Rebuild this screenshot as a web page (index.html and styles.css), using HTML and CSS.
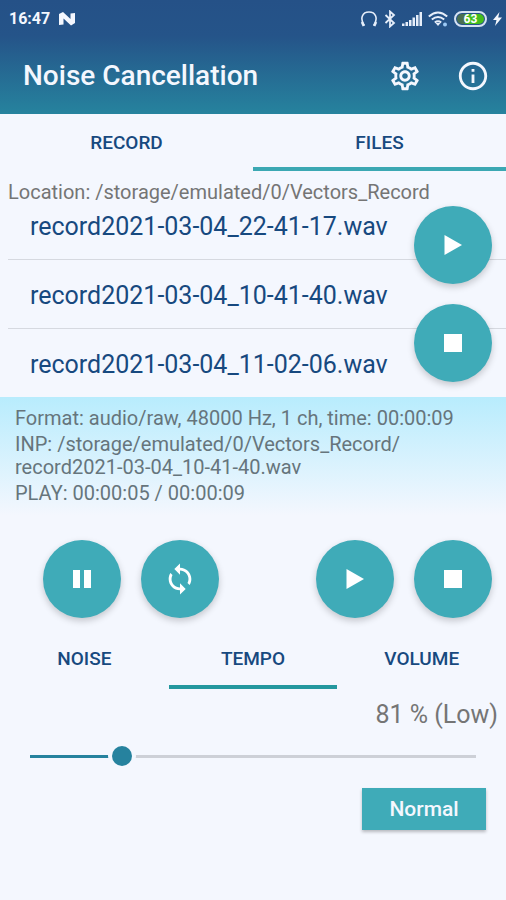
FILE: index.html
```html
<!DOCTYPE html>
<html lang="en">
<head>
<meta charset="utf-8">
<meta name="viewport" content="width=device-width, initial-scale=1">
<title>Noise Cancellation</title>
<link rel="stylesheet" href="styles.css">
</head>
<body>
<header class="header">
  <div class="status">
    <span class="clock">16:47</span>
    <svg class="status-logo" width="16" height="14" viewBox="0 0 16 14" fill="#f4f7fe"><path d="M0 2 4 0 11.500 7V1.500L16 1v10l-4 2.500L4.500 6.500v6L0 13z"/></svg>
    <div class="status-icons">
      <svg width="18" height="18" viewBox="0 0 18 18" fill="none" stroke="#e6eefa" stroke-width="1.600"><path d="M4.200 15.500C-.5 8 2.500 2 9 2s9.500 6 4.800 13.500"/><path d="M2 12l1.800 4M16 12l-1.800 4" stroke-width="2.600"/></svg>
      <svg width="12" height="18" viewBox="0 0 12 18" fill="none" stroke="#e6eefa" stroke-width="1.800"><path d="M1.500 5l8.500 8-4 3.500V1.500L10 5l-8.500 8"/></svg>
      <svg width="20" height="18" viewBox="0 0 20 18" fill="#e6eefa"><path d="M0 13.500h2.500V16H0zM3.500 12H6v4H3.500zM7 10h2.500v6H7zM10.500 7.500H13V16h-2.500zM14 5h2.500v11H14zM17.500 2H20v14h-2.500z"/></svg>
      <svg width="20" height="18" viewBox="0 0 20 18" fill="none" stroke="#e6eefa" stroke-width="2"><path d="M.8 6.500Q10-1.500 19.200 6.500M3.800 9.500q6.200-5 12.400 0M6.800 12.500q3.200-2.500 6.400 0"/><path d="M7.500 13h5L10 16z" fill="#e6eefa" stroke="none"/><circle cx="17" cy="14.500" r="2" fill="#9cc9f5" stroke="none"/></svg>
      <span class="battery">63</span>
      <svg width="9" height="14" viewBox="0 0 9 14" fill="#f4f7fe"><path d="M6.500 0 0 8h3.500L2 14l7-8.500H5.200z"/></svg>
    </div>
  </div>
  <div class="appbar">
    <h1 class="title">Noise Cancellation</h1>
    <button class="icon-button" type="button" aria-label="Settings">
      <svg width="34" height="34" viewBox="0 0 24 24" fill="currentColor"><path d="M19.430 12.980c.04-.32.070-.64.070-.98s-.03-.66-.07-.98l2.110-1.650c.19-.15.240-.42.120-.64l-2-3.460c-.09-.16-.26-.25-.44-.25-.06 0-.12.010-.17.030l-2.490 1c-.52-.4-1.080-.73-1.690-.98l-.38-2.650C14.460 2.180 14.250 2 14 2h-4c-.25 0-.46.180-.49.420l-.38 2.650c-.61.250-1.170.59-1.690.98l-2.490-1c-.06-.02-.12-.03-.18-.03-.17 0-.34.090-.43.250l-2 3.460c-.13.220-.07.490.12.640l2.110 1.650c-.04.320-.07.650-.07.980s.03.660.07.980l-2.110 1.650c-.19.150-.24.420-.12.640l2 3.460c.09.160.26.250.44.250.06 0 .12-.01.170-.03l2.490-1c.52.400 1.080.730 1.690.980l.38 2.650c.03.240.24.420.49.420h4c.25 0 .46-.18.490-.42l.38-2.650c.61-.25 1.170-.59 1.690-.98l2.490 1c.06.020.12.030.18.030.17 0 .34-.09.430-.25l2-3.460c.12-.22.070-.49-.12-.64l-2.110-1.650zm-1.980-1.710c.04.310.05.520.05.730s-.02.430-.05.730l-.14 1.130.89.700 1.080.84-.7 1.210-1.270-.51-1.040-.42-.9.680c-.43.320-.84.560-1.250.73l-1.060.43-.16 1.130-.2 1.350h-1.400l-.19-1.350-.16-1.130-1.060-.43c-.43-.18-.83-.41-1.230-.71l-.91-.7-1.060.43-1.270.51-.7-1.210 1.080-.84.89-.7-.14-1.130c-.03-.31-.05-.54-.05-.74s.02-.43.050-.73l.14-1.130-.89-.7-1.080-.84.7-1.210 1.270.51 1.040.42.900-.68c.43-.32.840-.56 1.250-.73l1.060-.43.160-1.130.2-1.350h1.390l.19 1.350.16 1.130 1.060.43c.43.180.83.410 1.230.71l.91.700 1.060-.43 1.270-.51.700 1.210-1.070.85-.89.700.14 1.130zM12 8c-2.210 0-4 1.790-4 4s1.790 4 4 4 4-1.790 4-4-1.790-4-4-4zm0 6c-1.100 0-2-.9-2-2s.9-2 2-2 2 .9 2 2-.9 2-2 2z"/></svg>
    </button>
    <button class="icon-button" type="button" aria-label="Information">
      <svg width="34" height="34" viewBox="0 0 24 24" fill="currentColor"><path d="M11 7h2v2h-2zm0 4h2v6h-2zm1-9C6.480 2 2 6.480 2 12s4.480 10 10 10 10-4.480 10-10S17.520 2 12 2zm0 18c-4.410 0-8-3.590-8-8s3.590-8 8-8 8 3.590 8 8-3.590 8-8 8z"/></svg>
    </button>
  </div>
</header>
<main>
  <div class="tabs" role="tablist">
    <button class="tab" type="button" role="tab" aria-selected="false">RECORD</button>
    <button class="tab" type="button" role="tab" aria-selected="true">FILES</button>
  </div>
  <section class="files">
    <p class="location">Location: /storage/emulated/0/Vectors_Record</p>
    <ul class="file-list">
      <li class="file">record2021-03-04_22-41-17.wav</li>
      <li class="file">record2021-03-04_10-41-40.wav</li>
      <li class="file">record2021-03-04_11-02-06.wav</li>
    </ul>
    <div class="floating">
      <button class="fab" type="button" aria-label="Play file"><svg width="34" height="34" viewBox="0 0 34 34" fill="currentColor"><path d="M8.500 7v20L26 17z"/></svg></button>
      <button class="fab" type="button" aria-label="Stop file"><svg width="34" height="34" viewBox="0 0 34 34" fill="currentColor"><path d="M8 8h18v18H8z"/></svg></button>
    </div>
  </section>
  <section class="info">
    <p>Format: audio/raw, 48000 Hz, 1 ch, time: 00:00:09</p>
    <p>INP: /storage/emulated/0/Vectors_Record/<br>record2021-03-04_10-41-40.wav</p>
    <p>PLAY: 00:00:05 / 00:00:09</p>
  </section>
  <div class="controls">
    <div class="control-group">
      <button class="fab" type="button" aria-label="Pause"><svg width="34" height="34" viewBox="0 0 34 34" fill="currentColor"><path d="M8 8h7v18H8zM19 8h7v18h-7z"/></svg></button>
      <button class="fab" type="button" aria-label="Loop"><svg width="34" height="34" viewBox="0 0 24 24" fill="currentColor"><path d="M12 4V1L8 5l4 4V6c3.310 0 6 2.690 6 6 0 1.010-.25 1.970-.7 2.800l1.460 1.460C19.540 15.030 20 13.570 20 12c0-4.420-3.580-8-8-8zm0 14c-3.310 0-6-2.690-6-6 0-1.010.25-1.970.7-2.800L5.240 7.740C4.460 8.970 4 10.430 4 12c0 4.420 3.580 8 8 8v3l4-4-4-4v3z"/></svg></button>
    </div>
    <div class="control-group">
      <button class="fab" type="button" aria-label="Play"><svg width="34" height="34" viewBox="0 0 34 34" fill="currentColor"><path d="M8.500 7v20L26 17z"/></svg></button>
      <button class="fab" type="button" aria-label="Stop"><svg width="34" height="34" viewBox="0 0 34 34" fill="currentColor"><path d="M8 8h18v18H8z"/></svg></button>
    </div>
  </div>
  <div class="tabs effects" role="tablist">
    <button class="tab" type="button" role="tab" aria-selected="false">NOISE</button>
    <button class="tab" type="button" role="tab" aria-selected="true">TEMPO</button>
    <button class="tab" type="button" role="tab" aria-selected="false">VOLUME</button>
  </div>
  <section class="tempo">
    <label class="tempo-value" for="tempo">81 % (Low)</label>
    <input class="slider" id="tempo" type="range" min="50" max="200" value="81" style="--fill: 0.2067">
    <button class="normal" type="button">Normal</button>
  </section>
</main>
</body>
</html>
```
FILE: styles.css
```css
* {
  box-sizing: border-box;
}

body {
  margin: 0;
  min-height: 100vh;
  background: #f4f7fe;
  color: #757575;
  font-family: Roboto, "Liberation Sans", sans-serif;
}

h1, p, ul {
  margin: 0;
  padding: 0;
}

button {
  padding: 0;
  border: 0;
  background: none;
  font-family: inherit;
  cursor: pointer;
}

svg {
  display: block;
  flex: none;
}

.header {
  background: linear-gradient(#255187 0, #255489 36px, #26839e 100%);
  color: #f4f7fe;
}

.status {
  display: flex;
  align-items: center;
  height: 38px;
  padding: 0 4px 0 9px;
}

.clock {
  font-size: 16px;
  font-weight: 700;
  line-height: 20px;
}

.status-logo {
  margin-left: 9px;
}

.status-icons {
  display: flex;
  align-items: center;
  gap: 6px;
  margin-left: auto;
}

.battery {
  width: 33px;
  height: 16px;
  border: 2px solid #d5e2f3;
  border-radius: 8px;
  background: linear-gradient(90deg, #4a7050 30%, #43bd1c 30%) content-box;
  padding: 1px;
  color: #fff;
  font-size: 12px;
  font-weight: 700;
  line-height: 10px;
  text-align: center;
}

.appbar {
  display: flex;
  align-items: center;
  gap: 34px;
  height: 76px;
  padding: 0 16px 0 23px;
}

.title {
  flex: 1;
  font-size: 28px;
  font-weight: 500;
  line-height: 34px;
}

.icon-button {
  color: #f4f7fe;
}

.tabs {
  display: flex;
}

.tab {
  flex: 1 1 0;
  padding: 17px 0 12px;
  border-bottom: 4px solid transparent;
  color: #17497f;
  font-size: 19px;
  font-weight: 500;
  line-height: 24px;
}

.tab[aria-selected="true"] {
  border-bottom-color: #3ba8b3;
}

.files {
  position: relative;
}

.location {
  padding: 9px 8px 7px;
  font-size: 20px;
  line-height: 24px;
}

.file-list {
  padding-left: 8px;
  list-style: none;
}

.file {
  padding: 20px 22px 16px;
  border-bottom: 1px solid #d6d9e0;
  color: #17497f;
  font-size: 25px;
  line-height: 32px;
}

.file:first-child {
  padding-top: 0;
}

.file:last-child {
  border-bottom: 0;
}

.floating {
  position: absolute;
  top: 35px;
  right: 14px;
  display: grid;
  gap: 20px;
}

.fab {
  display: grid;
  place-items: center;
  width: 78px;
  height: 78px;
  border-radius: 50%;
  background: #3fabb8;
  box-shadow: 0 3px 7px rgba(0, 0, 0, 0.2);
  color: #fff;
}

.info {
  display: grid;
  gap: 3px;
  padding: 10px 15px 11px;
  background: linear-gradient(#b8ecfd, #f4f7fe);
  color: #66757c;
  font-size: 20px;
  line-height: 23px;
}

.controls {
  display: flex;
  justify-content: space-between;
  padding: 24px 14px 14px 43px;
}

.control-group {
  display: flex;
  gap: 20px;
}

.effects .tab {
  padding: 15px 0 14px;
}

.effects .tab[aria-selected="true"] {
  border-bottom-color: #24989f;
}

.tempo {
  display: grid;
  padding: 10px 20px 20px;
}

.tempo-value {
  margin-right: -12px;
  font-size: 25px;
  line-height: 32px;
  text-align: right;
}

.slider {
  width: 100%;
  height: 20px;
  margin: 15px 0 22px;
  appearance: none;
  background: none;
}

.slider::-webkit-slider-runnable-track {
  height: 20px;
  background:
    linear-gradient(#26829e, #26829e) 10px center / calc((100% - 20px) * var(--fill)) 3px no-repeat,
    linear-gradient(#cdd0d7, #cdd0d7) 10px center / calc(100% - 20px) 3px no-repeat;
}

.slider::-webkit-slider-thumb {
  width: 20px;
  height: 20px;
  appearance: none;
  border-radius: 50%;
  background: #26829e;
  box-shadow: 0 0 0 4px #f4f7fe;
}

.normal {
  justify-self: end;
  width: 124px;
  height: 42px;
  background: #3fabb8;
  box-shadow: 0 2px 3px rgba(0, 0, 0, 0.25);
  color: #f4f7fe;
  font-size: 21px;
  font-weight: 500;
  line-height: 26px;
}
```
